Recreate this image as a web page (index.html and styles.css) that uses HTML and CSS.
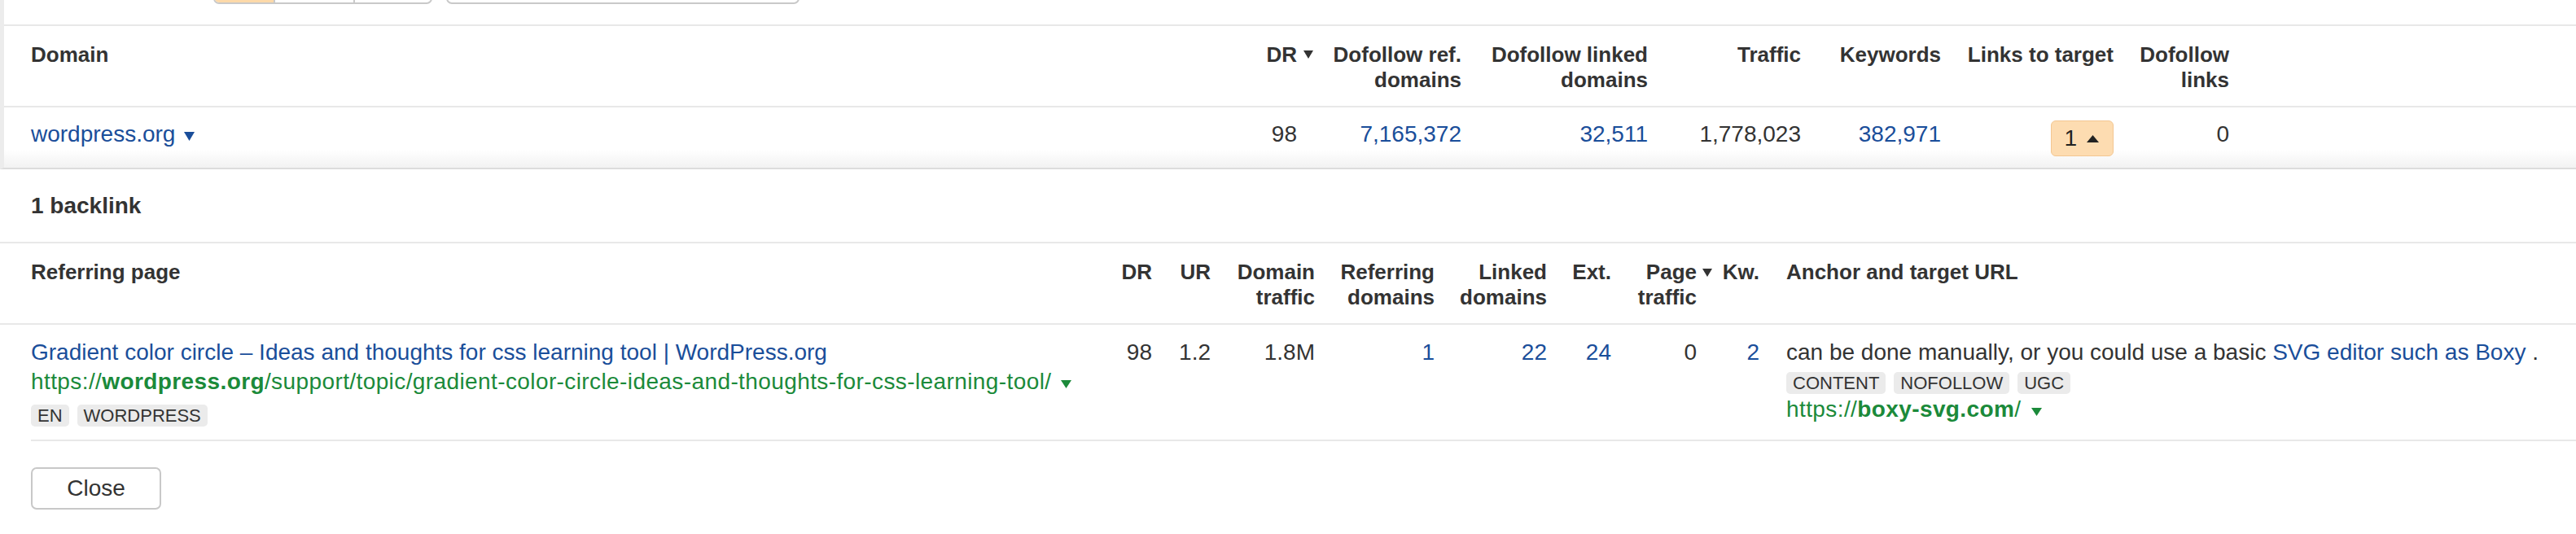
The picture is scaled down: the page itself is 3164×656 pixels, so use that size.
FILE: index.html
```html
<!DOCTYPE html>
<html lang="en">
<head>
<meta charset="utf-8">
<title>Backlinks</title>
<link rel="stylesheet" href="styles.css">
</head>
<body>
<div class="domain-panel">
  <div class="toolbar">
    <div class="seg-group">
      <span class="seg seg-active"></span>
      <span class="seg seg-b"></span>
      <span class="seg seg-c"></span>
    </div>
    <div class="search-box"></div>
  </div>
  <div class="dgrid dhead">
    <div class="cell first">Domain</div>
    <div class="cell">DR<svg class="sort" width="12" height="10" viewBox="0 0 12 10"><polygon points="0,0 12,0 6,10" fill="#333"/></svg></div>
    <div class="cell">Dofollow ref.<br>domains</div>
    <div class="cell">Dofollow linked<br>domains</div>
    <div class="cell">Traffic</div>
    <div class="cell">Keywords</div>
    <div class="cell">Links to target</div>
    <div class="cell">Dofollow<br>links</div>
    <div class="cell"></div>
  </div>
  <div class="dgrid drow">
    <div class="cell first"><a class="link">wordpress.org</a><svg class="drop" width="13" height="11" viewBox="0 0 13 11"><polygon points="0,0 13,0 6.5,11" fill="#1a4e9a"/></svg></div>
    <div class="cell">98</div>
    <div class="cell link">7,165,372</div>
    <div class="cell link">32,511</div>
    <div class="cell">1,778,023</div>
    <div class="cell link">382,971</div>
    <div class="cell"><span class="badge"><span>1</span><svg width="15" height="9" viewBox="0 0 15 9"><polygon points="0,9 15,9 7.5,0" fill="#222"/></svg></span></div>
    <div class="cell">0</div>
    <div class="cell"></div>
  </div>
</div>

<div class="bl-title">1 backlink</div>

<div class="bgrid bhead">
  <div class="cell first">Referring page</div>
  <div class="cell">DR</div>
  <div class="cell">UR</div>
  <div class="cell">Domain<br>traffic</div>
  <div class="cell">Referring<br>domains</div>
  <div class="cell">Linked<br>domains</div>
  <div class="cell">Ext.</div>
  <div class="cell">Page<svg class="sort sort-p" width="12" height="10" viewBox="0 0 12 10"><polygon points="0,0 12,0 6,10" fill="#333"/></svg><br>traffic</div>
  <div class="cell">Kw.</div>
  <div class="cell anchor">Anchor and target URL</div>
</div>
<div class="bgrid brow">
  <div class="cell first">
    <div class="link">Gradient color circle – Ideas and thoughts for css learning tool | WordPress.org</div>
    <div class="url">https://<b>wordpress.org</b>/support/topic/gradient-color-circle-ideas-and-thoughts-for-css-learning-tool/<svg class="gdrop" width="13" height="10" viewBox="0 0 13 10"><polygon points="0,0 13,0 6.5,10" fill="#1b8a3a"/></svg></div>
    <div class="tags tags-left"><span class="tag">EN</span><span class="tag">WORDPRESS</span></div>
  </div>
  <div class="cell">98</div>
  <div class="cell">1.2</div>
  <div class="cell">1.8M</div>
  <div class="cell link">1</div>
  <div class="cell link">22</div>
  <div class="cell link">24</div>
  <div class="cell">0</div>
  <div class="cell link">2</div>
  <div class="cell anchor">
    <div>can be done manually, or you could use a basic <span class="link">SVG editor such as Boxy</span> .</div>
    <div class="tags tags-right"><span class="tag">CONTENT</span><span class="tag">NOFOLLOW</span><span class="tag">UGC</span></div>
    <div class="url url-right">https://<b>boxy-svg.com</b>/<svg class="gdrop" width="13" height="10" viewBox="0 0 13 10"><polygon points="0,0 13,0 6.5,10" fill="#1b8a3a"/></svg></div>
  </div>
</div>
<div class="bfoot"></div>
<div class="close-wrap"><button class="close-btn">Close</button></div>
</body>
</html>
```
FILE: styles.css
```css
* { box-sizing: border-box; }
html, body { margin: 0; padding: 0; background: #fff; }
body {
  font-family: "Liberation Sans", Arial, Helvetica, sans-serif;
  color: #333;
  width: 3164px;
  overflow: hidden;
}

.domain-panel {
  border-left: 5px solid #ececec;
  border-bottom: 2px solid #dcdcdc;
}

.toolbar {
  height: 32px;
  border-bottom: 2px solid #e8e8e8;
  display: flex;
  align-items: flex-start;
  overflow: hidden;
  padding-left: 257px;
}
.seg-group {
  display: flex;
  height: 45px;
  margin-top: -40px;
  border: 2px solid #c9c9c9;
  border-radius: 0 0 7px 7px;
  overflow: hidden;
}
.seg { display: block; height: 100%; border-left: 2px solid #c9c9c9; }
.seg-active { width: 72px; border-left: 0; background: #fdd9a9; }
.seg-b { width: 98px; }
.seg-c { width: 95px; }
.search-box {
  width: 434px;
  height: 45px;
  margin-top: -40px;
  margin-left: 17px;
  border: 2px solid #c9c9c9;
  border-radius: 0 0 7px 7px;
}

.dgrid {
  display: grid;
  grid-template-columns: 1fr 100px 202px 229px 188px 172px 212px 142px 426px;
}
.bgrid {
  display: grid;
  grid-template-columns: 1fr 85px 72px 128px 147px 138px 79px 105px 77px 1003px;
}
.cell { text-align: right; white-space: nowrap; }
.dgrid .cell.first { text-align: left; padding-left: 33px; }
.bgrid .cell.first { text-align: left; padding-left: 38px; }
.cell.anchor { text-align: left; padding-left: 33px; }

.dhead, .bhead {
  padding: 20px 0 16px;
  font-size: 26px;
  font-weight: 700;
  line-height: 31px;
  border-bottom: 2px solid #e8e8e8;
}
.sort { margin-left: 8px; margin-right: -20px; vertical-align: 4px; }
.sort-p { margin-left: 7px; margin-right: -19px; vertical-align: 3px; }

.link { color: #1a4e9a; text-decoration: none; }

.drow {
  height: 74px;
  padding-top: 17px;
  font-size: 28px;
  line-height: 32px;
  background: linear-gradient(to bottom, #fff 0, #fff 52px, #f2f2f2 74px);
}
.drop { margin-left: 11px; vertical-align: 1px; }

.badge {
  display: inline-flex;
  align-items: center;
  height: 44px;
  margin-top: -1px;
  padding: 0 17px 0 15px;
  gap: 12px;
  background: #fddcb1;
  border: 1px solid #f3c792;
  border-radius: 6px;
  vertical-align: top;
  color: #222;
}

.bl-title {
  height: 91px;
  padding: 29px 0 0 38px;
  font-size: 28px;
  font-weight: 700;
  line-height: 32px;
  border-bottom: 2px solid #e8e8e8;
}

.brow {
  padding: 16px 0 16px;
  font-size: 28px;
  line-height: 36px;
}
.url { color: #1b8a3a; letter-spacing: 0.4px; }
.url b { font-weight: 700; }
.gdrop { margin-left: 12px; vertical-align: 1px; }

.tags { display: flex; gap: 10px; }
.tags-left { margin-top: 10px; }
.tags-right { margin-top: 6px; }
.url-right { margin-top: 1px; }
.tag {
  display: block;
  height: 27px;
  line-height: 27px;
  padding: 0 8px;
  font-size: 22px;
  background: #ebebeb;
  border-radius: 5px;
  color: #333;
}

.bfoot {
  margin-left: 38px;
  border-top: 2px solid #e8e8e8;
}
.close-wrap { padding: 32px 0 0 38px; }
.close-btn {
  display: block;
  width: 160px;
  height: 52px;
  border: 2px solid #c8c8c8;
  border-radius: 7px;
  background: #fff;
  font-family: "Liberation Sans", Arial, Helvetica, sans-serif;
  font-size: 28px;
  color: #333;
  padding: 0;
}
```
